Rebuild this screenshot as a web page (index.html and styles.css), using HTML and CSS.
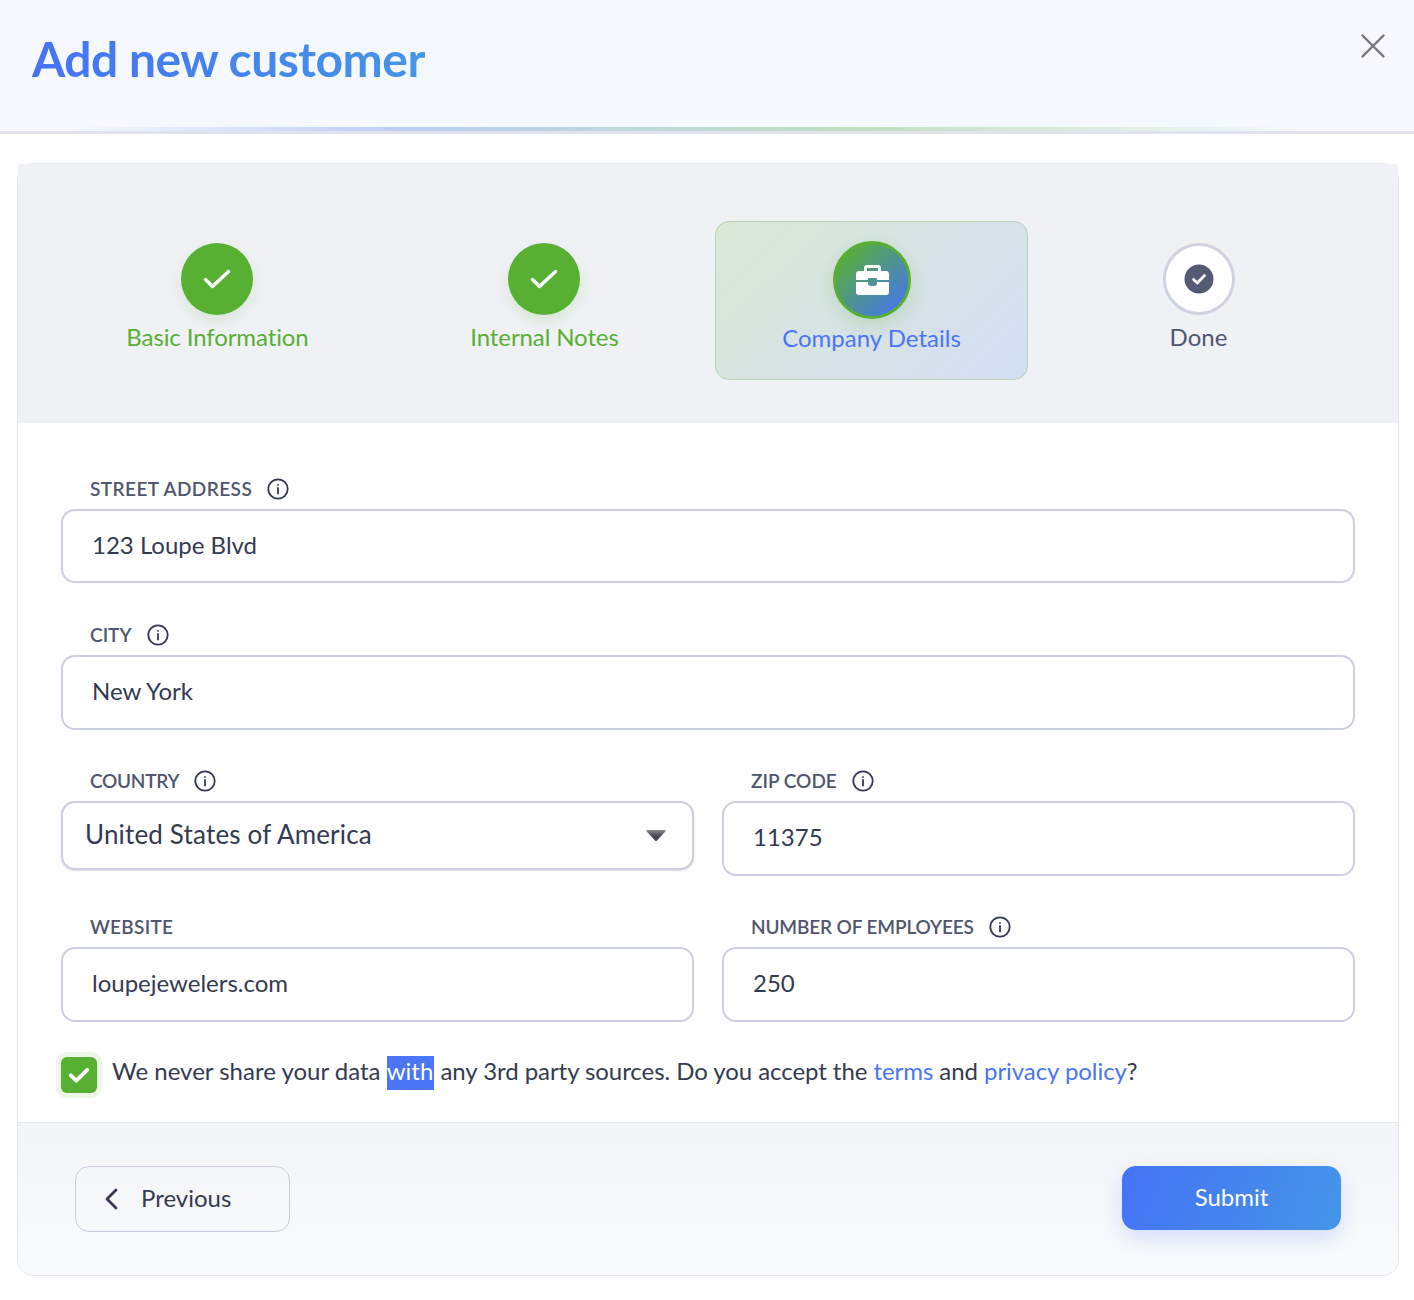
FILE: index.html
```html
<!DOCTYPE html>
<html lang="en">
<head>
<meta charset="utf-8">
<title>Add new customer</title>
<link rel="stylesheet" href="styles.css">
</head>
<body>
<header class="head">
  <h1 class="title">Add new customer</h1>
  <button class="close" aria-label="Close"><svg width="26" height="26" viewBox="0 0 26 26"><path d="M2.500 2.500 23.500 23.500M23.500 2.500 2.500 23.500" fill="none" stroke="#72767e" stroke-width="2.400" stroke-linecap="round"/></svg></button>
</header>
<div class="rule"></div>
<main class="card">
  <section class="steps">
    <div class="step done">
      <span class="dot"><svg width="28" height="28" viewBox="0 0 28 28"><path d="M2.500 14.500 9.500 21.500 25.500 6.500" fill="none" stroke="#fff" stroke-width="3.400" stroke-linecap="round" stroke-linejoin="round"/></svg></span>
      <span class="step-name">Basic Information</span>
    </div>
    <div class="step done">
      <span class="dot"><svg width="28" height="28" viewBox="0 0 28 28"><path d="M2.500 14.500 9.500 21.500 25.500 6.500" fill="none" stroke="#fff" stroke-width="3.400" stroke-linecap="round" stroke-linejoin="round"/></svg></span>
      <span class="step-name">Internal Notes</span>
    </div>
    <div class="step active">
      <span class="dot"><svg class="case" width="33" height="30" viewBox="0 0 33 30"><path fill="#fff" d="M11 0h11a3 3 0 0 1 3 3v3h5a3 3 0 0 1 3 3v6H21v-1a1 1 0 0 0-1-1h-7a1 1 0 0 0-1 1v1H0V9a3 3 0 0 1 3-3h5V3a3 3 0 0 1 3-3Zm0 3v3h11V3H11ZM0 17h12v1a3 3 0 0 0 3 3h3a3 3 0 0 0 3-3v-1h12v10a3 3 0 0 1-3 3H3a3 3 0 0 1-3-3V17Z"/></svg></span>
      <span class="step-name">Company Details</span>
    </div>
    <div class="step todo">
      <span class="dot"><svg width="30" height="30" viewBox="0 0 30 30"><circle cx="15" cy="15" r="14.500" fill="#545a74"/><path d="M9.500 15.500 13.300 19 20.500 11.500" fill="none" stroke="#fff" stroke-width="2.800" stroke-linecap="round" stroke-linejoin="round"/></svg></span>
      <span class="step-name">Done</span>
    </div>
  </section>

  <form class="form">
    <div class="field wide">
      <div class="label label-street">STREET ADDRESS <svg class="info" viewBox="0 0 22 22"><circle cx="11" cy="11" r="9.700"/><path d="M11 10v5.500M11 6.800v.1"/></svg></div>
      <div class="input street">123 Loupe Blvd</div>
    </div>
    <div class="field wide">
      <div class="label">CITY <svg class="info" viewBox="0 0 22 22"><circle cx="11" cy="11" r="9.700"/><path d="M11 10v5.500M11 6.800v.1"/></svg></div>
      <div class="input">New York</div>
    </div>
    <div class="field">
      <div class="label label-country">COUNTRY <svg class="info" viewBox="0 0 22 22"><circle cx="11" cy="11" r="9.700"/><path d="M11 10v5.500M11 6.800v.1"/></svg></div>
      <div class="select"><span>United States of America</span><svg width="20" height="12" viewBox="0 0 20 12"><defs><linearGradient id="arrow" x1="0" y1="0" x2="0" y2="1"><stop offset="0" stop-color="#8a8a8a"/><stop offset=".5" stop-color="#4d4f55"/><stop offset="1" stop-color="#3c3f48"/></linearGradient></defs><path d="M1.500 1h17a1 1 0 0 1 .8 1.600L11 11.500a1.300 1.300 0 0 1-2 0L.7 2.600A1 1 0 0 1 1.500 1Z" fill="url(#arrow)"/></svg></div>
    </div>
    <div class="field">
      <div class="label">ZIP CODE <svg class="info" viewBox="0 0 22 22"><circle cx="11" cy="11" r="9.700"/><path d="M11 10v5.500M11 6.800v.1"/></svg></div>
      <div class="input">11375</div>
    </div>
    <div class="field">
      <div class="label label-website">WEBSITE</div>
      <div class="input">loupejewelers.com</div>
    </div>
    <div class="field">
      <div class="label label-number">NUMBER OF EMPLOYEES <svg class="info" viewBox="0 0 22 22"><circle cx="11" cy="11" r="9.700"/><path d="M11 10v5.500M11 6.800v.1"/></svg></div>
      <div class="input">250</div>
    </div>
    <div class="consent wide">
      <span class="check"><svg width="20" height="16" viewBox="0 0 20 16"><path d="M1.800 8.300 7.300 13.600 18.200 2.800" fill="none" stroke="#fff" stroke-width="3.800" stroke-linecap="round" stroke-linejoin="round"/></svg></span>
      <p class="consent-text">We never share your data <mark class="sel">with</mark> <span class="rest">any 3rd party sources. Do you accept the <a href="#">terms</a> and <a href="#">privacy policy</a>?</span></p>
    </div>
  </form>

  <footer class="foot">
    <button class="prev" type="button"><svg width="14" height="22" viewBox="0 0 14 22"><path d="M12 2 3 11l9 9" fill="none" stroke="#343a50" stroke-width="2.800" stroke-linecap="round" stroke-linejoin="round"/></svg><span class="btn-text">Previous</span></button>
    <button class="submit" type="button"><span class="btn-text">Submit</span></button>
  </footer>
</main>
</body>
</html>
```
FILE: styles.css
```css
* { box-sizing: border-box; }
html, body { margin: 0; padding: 0; }
body {
  width: 1414px;
  height: 1300px;
  background: #fff;
  font-family: "Lato", "Noto Sans", sans-serif;
  color: #343a50;
  overflow: hidden;
}
.head {
  height: 127px;
  background: #f5f8fe;
  display: flex;
  justify-content: space-between;
  align-items: flex-start;
  padding: 0 28px 0 32px;
}
.title {
  margin: 29px 0 0;
  font-size: 48px;
  line-height: 60px;
  font-weight: 700;
  letter-spacing: -.5px;
  background: linear-gradient(90deg, #4573f5, #4495e8);
  -webkit-background-clip: text;
  background-clip: text;
  color: transparent;
}
.close {
  margin-top: 33px;
  padding: 0;
  border: 0;
  background: none;
  width: 26px;
  height: 26px;
}
.rule {
  height: 7px;
  border-bottom: 3px solid #e0e3ee;
  background: linear-gradient(90deg, #f5f8fe 5%, #bccdf7 28%, #bfdfbe 60%, #f5f8fe 92%);
}
.card {
  margin: 29px 15px 0 17px;
  height: 1113px;
  border: 1px solid #e4e6ee;
  border-radius: 16px;
  display: flex;
  flex-direction: column;
}
.steps {
  height: 259px;
  background: #f0f1f5;
  border-top-left-radius: 3px;
  border-top-right-radius: 3px;
  padding: 57px 43px 43px;
  display: grid;
  grid-template-columns: repeat(4, 313px);
  column-gap: 14px;
}
.step {
  height: 159px;
  display: flex;
  flex-direction: column;
  align-items: center;
  padding-top: 22px;
  font-size: 24px;
  line-height: 30px;
}
.dot {
  width: 72px;
  height: 72px;
  border-radius: 50%;
  display: flex;
  align-items: center;
  justify-content: center;
  margin-bottom: 7px;
}
.step-name { white-space: nowrap; }
.done { color: #58b033; padding-right: 2px; }
.done .step-name { margin-left: 2px; letter-spacing: -.1px; }
.done .dot {
  background: #58b033;
  box-shadow: 0 6px 14px rgba(88, 176, 51, .16);
}
.active {
  border: 1px solid #b4d3b0;
  border-radius: 14px;
  background: linear-gradient(135deg, #d9e9d6 0%, #d7e2e6 55%, #d4def4 100%);
  color: #4a75f5;
  padding-top: 19px;
}
.active .dot {
  width: 78px;
  height: 78px;
  border: 3px solid #58b033;
  background: linear-gradient(135deg, #58b033 10%, #4573f5 95%);
  box-shadow: 0 6px 18px rgba(88, 176, 51, .22);
  margin-bottom: 4px;
}
.case { margin-left: 2px; }
.todo { color: #50566e; }
.todo .dot {
  background: #fff;
  border: 3px solid #cfd3df;
}
.form {
  flex: 1;
  padding: 56px 43px 0;
  display: grid;
  grid-template-columns: 633px 633px;
  column-gap: 28px;
  row-gap: 42px;
  align-content: start;
}
.wide { grid-column: 1 / -1; }
.field { height: 104px; }
.label {
  height: 30px;
  padding: 0 0 0 29px;
  display: flex;
  align-items: flex-start;
  gap: 15px;
  font-size: 19px;
  line-height: 19px;
  font-weight: 600;
  color: #50566e;
}
.label-street { letter-spacing: .43px; }
.label-country { letter-spacing: -.28px; }
.label-website { letter-spacing: .28px; }
.label-number { letter-spacing: -.14px; }
.info {
  width: 22px;
  height: 22px;
  flex: none;
  margin-top: -1px;
  fill: none;
  stroke: #343a50;
  stroke-width: 1.800;
  stroke-linecap: round;
}
.input {
  height: 75px;
  border: 2px solid #ccd0de;
  border-radius: 14px;
  background: #fff;
  display: flex;
  align-items: center;
  padding: 0 29px 4px;
  font-size: 24px;
  color: #343a50;
}
.street { height: 74px; }
.select {
  height: 69px;
  border: 2px solid #ccd0de;
  border-radius: 14px;
  background: #fff;
  box-shadow: 0 1px 2px rgba(80, 86, 110, .2);
  display: flex;
  align-items: center;
  justify-content: space-between;
  padding: 0 26px 0 22px;
  font-size: 26px;
  letter-spacing: .17px;
  color: #343a50;
}
.select span { padding-bottom: 4px; }
.select svg { margin-bottom: 2px; }
.consent {
  display: flex;
  align-items: center;
  gap: 15px;
  margin-top: -9px;
}
.check {
  width: 36px;
  height: 36px;
  flex: none;
  background: #58b033;
  border-radius: 6px;
  box-shadow: 0 0 0 5px #eef6ea;
  display: flex;
  align-items: center;
  justify-content: center;
}
.consent-text {
  margin: 0;
  padding-bottom: 6px;
  font-size: 24px;
  line-height: 34px;
  white-space: nowrap;
}
.sel {
  background: #4a75f5;
  color: #fff;
  display: inline-block;
  line-height: 30px;
  padding: 0 1px 4px 0;
}
.rest { letter-spacing: -.06px; }
.consent-text a { color: #4a75f5; text-decoration: none; }
.foot {
  height: 153px;
  border-top: 1px solid #e4e6ee;
  border-radius: 0 0 16px 16px;
  background: linear-gradient(180deg, #f4f5f8, #f9fafc);
  display: flex;
  justify-content: space-between;
  align-items: flex-start;
  padding: 43px 57px 0;
}
.prev, .submit {
  font-family: inherit;
  font-size: 24px;
  padding: 0;
}
.btn-text { display: block; padding-bottom: 4px; }
.prev {
  width: 215px;
  height: 66px;
  border: 1px solid #c9cbdc;
  border-radius: 14px;
  background: transparent;
  color: #343a50;
  display: flex;
  align-items: center;
  gap: 23px;
  padding-left: 28px;
}
.submit {
  width: 219px;
  height: 64px;
  border: 0;
  border-radius: 14px;
  color: #fff;
  background: linear-gradient(110deg, #4573f5, #4495e8);
  box-shadow: 0 8px 20px rgba(70, 115, 245, .2);
}
```
